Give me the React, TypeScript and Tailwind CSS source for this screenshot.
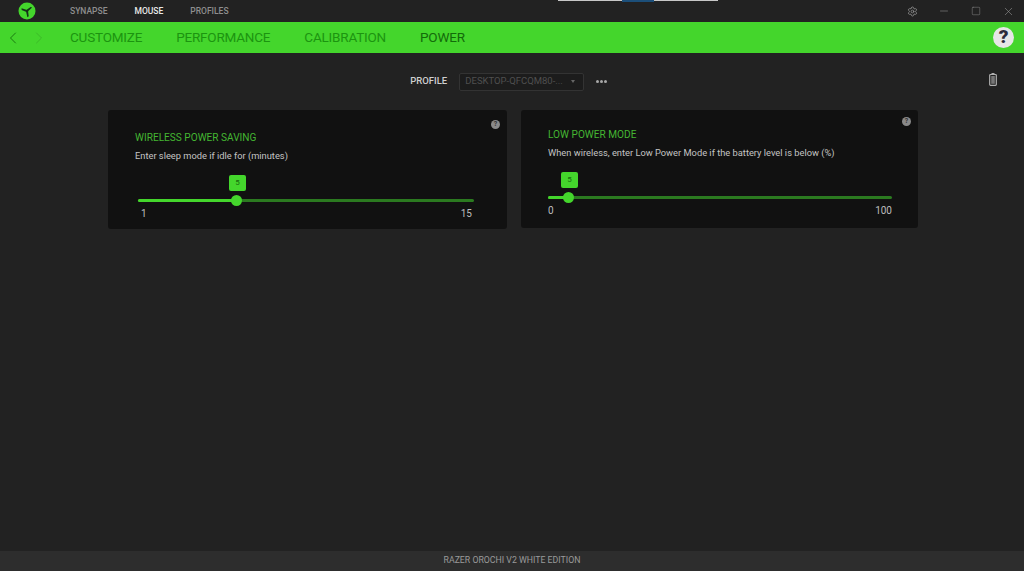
import { Minus, Square, X, ChevronLeft, ChevronRight, Settings } from "lucide-react";

function RazerLogo() {
  const blade = "M9 9.6 L7.9 8.9 L8.2 3.6 L9.7 2.9 L10 8.7 Z";
  return (
    <svg width="18" height="18" viewBox="0 0 18 18">
      <circle cx="9" cy="9" r="8.5" fill="#44d62c" />
      <g fill="#16301a">
        <path d={blade} transform="rotate(50 9 9)" />
        <path d={blade} transform="rotate(170 9 9)" />
        <path d={blade} transform="rotate(290 9 9)" />
      </g>
    </svg>
  );
}

function HelpDot({ className }: { className: string }) {
  return (
    <div className={`absolute flex h-[9px] w-[9px] items-center justify-center rounded-full bg-[#8a8a8a] text-[7px] font-bold leading-none text-[#333] ${className}`}>
      ?
    </div>
  );
}

function Slider({ min, max, fill, thumb, bubble, labels }: { min: string; max: string; fill: string; thumb: string; bubble: string; labels: string }) {
  return (
    <div className="relative">
      <div className="h-[3px] rounded-full bg-[#2b7a20]">
        <div className={`h-[3px] rounded-full bg-[#44d62c] ${fill}`} />
      </div>
      <div className={`absolute top-[-4px] h-[11px] w-[11px] rounded-full bg-[#44d62c] ${thumb}`} />
      <div className={`absolute top-[-24px] flex h-[16px] w-[17px] items-center justify-center rounded-[2px] bg-[#44d62c] text-[8px] text-[#176b0c] ${bubble}`}>
        5
      </div>
      <div className={`mt-[6px] flex justify-between text-[10px] leading-[12px] text-[#bdbdbd] ${labels}`}>
        <span>{min}</span>
        <span>{max}</span>
      </div>
    </div>
  );
}

export default function App() {
  return (
    <div className="flex h-[571px] w-[1024px] flex-col overflow-hidden bg-[#222222] font-['Roboto',sans-serif]">
      <div className="relative flex h-[22px] items-center bg-[#222222]">
        <div className="absolute left-[558px] top-0 flex h-px w-[160px] bg-[#c8c8c8]">
          <div className="ml-[64px] h-[2px] w-[32px] bg-[#1c4f7a]" />
        </div>
        <div className="ml-[18px] mr-[34px]">
          <RazerLogo />
        </div>
        <div className="flex gap-[27px] text-[8.5px] font-medium">
          <span className="text-[#8e8e8e]">SYNAPSE</span>
          <span className="text-[#e8e8e8]">MOUSE</span>
          <span className="text-[#8e8e8e]">PROFILES</span>
        </div>
        <div className="ml-auto flex items-center text-[#a0a0a0]">
          <div className="flex w-[32px] justify-center"><Settings size={11} strokeWidth={1.5} /></div>
          <div className="flex w-[32px] justify-center"><Minus size={12} strokeWidth={1} /></div>
          <div className="flex w-[32px] justify-center"><Square size={10} strokeWidth={1} /></div>
          <div className="flex w-[32px] justify-center"><X size={13} strokeWidth={1} /></div>
        </div>
      </div>

      <div className="flex h-[31px] items-center bg-[#44d62c]">
        <ChevronLeft size={20} strokeWidth={1.2} className="ml-[3px] text-[#1a7a10]" />
        <ChevronRight size={20} strokeWidth={1.2} className="ml-[6px] text-[#3cb928]" />
        <div className="ml-[21px] flex gap-[34px] text-[13.5px] tracking-[-0.2px]">
          <span className="text-[#1c9410]">CUSTOMIZE</span>
          <span className="text-[#1c9410]">PERFORMANCE</span>
          <span className="text-[#1c9410]">CALIBRATION</span>
          <span className="text-[#136b0a]">POWER</span>
        </div>
        <div className="ml-auto mr-[10px] flex h-[21px] w-[21px] items-center justify-center rounded-full bg-[#e6e6e6] text-[19px] font-black text-[#2d2a3a]">
          ?
        </div>
      </div>

      <div className="flex-1">
        <div className="relative flex h-[57px] items-center justify-center pr-[7px]">
          <span className="mr-[12px] text-[9.5px] font-medium text-[#cfcfcf]">PROFILE</span>
          <div className="flex h-[18px] w-[125px] items-center justify-between rounded-[2px] border border-[#333333] bg-[#1c1c1c] pl-[5px] pr-[8px] text-[9.5px] text-[#4f4f4f]">
            <span>DESKTOP-QFCQM80-...</span>
            <span className="h-0 w-0 border-x-[2.5px] border-t-[3px] border-x-transparent border-t-[#666666]" />
          </div>
          <span className="ml-[12px] flex gap-[1.5px]">
            <span className="h-[2.5px] w-[2.5px] rounded-full bg-[#a8a8a8]" />
            <span className="h-[2.5px] w-[2.5px] rounded-full bg-[#a8a8a8]" />
            <span className="h-[2.5px] w-[2.5px] rounded-full bg-[#a8a8a8]" />
          </span>
          <svg className="absolute left-[989px] top-[20px]" width="8" height="13" viewBox="0 0 8 13">
            <rect x="2.5" y="0" width="3" height="1.5" fill="#b0b0b0" />
            <rect x="0.7" y="1.5" width="6.6" height="10.8" rx="0.8" fill="none" stroke="#b0b0b0" strokeWidth="1.2" />
            <rect x="2.2" y="3" width="3.6" height="7.8" fill="#777777" />
          </svg>
        </div>

        <div className="ml-[108px] flex gap-[14px]">
          <div className="relative h-[119px] w-[399px] rounded-[3px] bg-[#111111] pl-[27px] pt-[21px]">
            <HelpDot className="right-[7px] top-[10px]" />
            <div className="text-[10.1px] leading-[13px] text-[#44b632]">WIRELESS POWER SAVING</div>
            <div className="mt-[5px] text-[9.3px] leading-[13px] text-[#c4c4c4]">Enter sleep mode if idle for (minutes)</div>
            <div className="ml-[3px] mt-[37px] w-[336px]">
              <Slider min="1" max="15" fill="w-[98px]" thumb="left-[92.5px]" bubble="left-[91px]" labels="pl-[3px] pr-[2px]" />
            </div>
          </div>
          <div className="relative h-[118px] w-[397px] rounded-[3px] bg-[#111111] pl-[27px] pt-[18px]">
            <HelpDot className="right-[7px] top-[7px]" />
            <div className="text-[10.1px] leading-[13px] text-[#44b632]">LOW POWER MODE</div>
            <div className="mt-[5px] text-[9.3px] leading-[13px] text-[#c4c4c4]">When wireless, enter Low Power Mode if the battery level is below (%)</div>
            <div className="mt-[37px] w-[344px]">
              <Slider min="0" max="100" fill="w-[20px]" thumb="left-[15px]" bubble="left-[13px]" labels="" />
            </div>
          </div>
        </div>
      </div>

      <div className="flex h-[20px] items-center justify-center bg-[#2d2d2d] text-[8.75px] text-[#9a9a9a]">
        RAZER OROCHI V2 WHITE EDITION
      </div>
    </div>
  );
}
